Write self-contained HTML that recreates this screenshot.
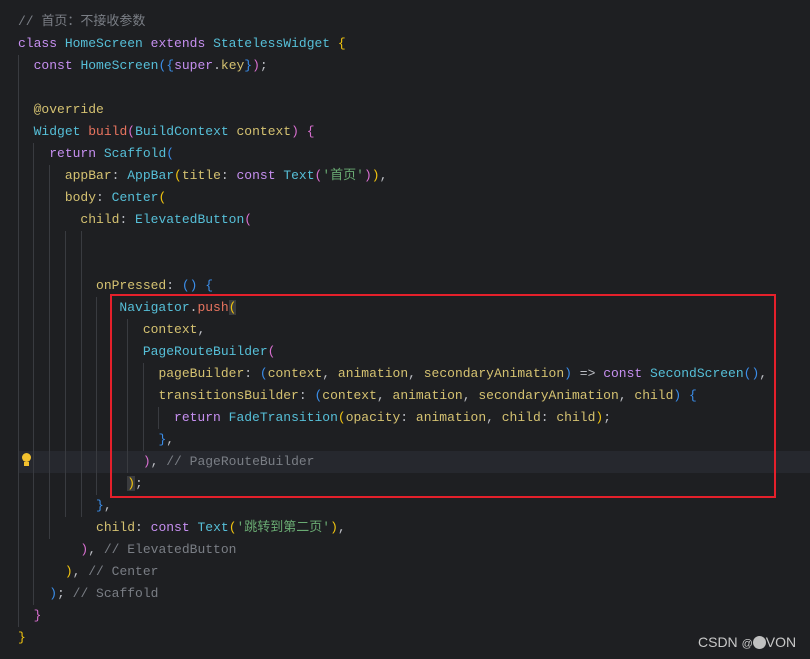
<!DOCTYPE html>
<html><head><meta charset="utf-8"><style>
body{margin:0;width:810px;height:659px;background:#1e1f22;overflow:hidden;position:relative;font-family:"Liberation Mono","Noto Sans CJK SC",monospace;font-size:13px;color:#bcbec4}
.l{position:absolute;left:18px;height:22px;line-height:22px;white-space:pre}
.g{position:absolute;width:1px;background:#393b40}
.c{color:#7a7e85}.k{color:#c68ff0}.t{color:#56bfd8}.p{color:#d5c271}.m{color:#e8745f}.s{color:#6aab73}
.y{color:#f1c40f}.pk{color:#d86fd0}.b{color:#3b8eea}
</style></head><body>
<div style="position:absolute;left:18px;top:451px;width:792px;height:22px;background:#26282e"></div>
<div class="g" style="left:18px;top:55px;height:572px"></div>
<div class="g" style="left:33px;top:143px;height:462px"></div>
<div class="g" style="left:49px;top:165px;height:374px"></div>
<div class="g" style="left:65px;top:231px;height:286px"></div>
<div class="g" style="left:81px;top:231px;height:286px"></div>
<div class="g" style="left:96px;top:297px;height:198px"></div>
<div class="g" style="left:127px;top:319px;height:154px"></div>
<div class="g" style="left:143px;top:363px;height:88px"></div>
<div class="g" style="left:158px;top:407px;height:22px"></div>
<div class="l c" style="top:11px">// 首页：不接收参数</div>
<div class="l" style="top:33px"><span class="k">class</span> <span class="t">HomeScreen</span> <span class="k">extends</span> <span class="t">StatelessWidget</span> <span class="y">{</span></div>
<div class="l" style="top:55px">  <span class="k">const</span> <span class="t">HomeScreen</span><span class="b">({</span><span class="k">super</span>.<span class="p">key</span><span class="b">}</span><span class="pk">)</span>;</div>
<div class="l" style="top:99px">  <span class="p">@override</span></div>
<div class="l" style="top:121px">  <span class="t">Widget</span> <span class="m">build</span><span class="pk">(</span><span class="t">BuildContext</span> <span class="p">context</span><span class="pk">)</span> <span class="pk">{</span></div>
<div class="l" style="top:143px">    <span class="k">return</span> <span class="t">Scaffold</span><span class="b">(</span></div>
<div class="l" style="top:165px">      <span class="p">appBar</span>: <span class="t">AppBar</span><span class="y">(</span><span class="p">title</span>: <span class="k">const</span> <span class="t">Text</span><span class="pk">(</span><span class="s">'首页'</span><span class="pk">)</span><span class="y">)</span>,</div>
<div class="l" style="top:187px">      <span class="p">body</span>: <span class="t">Center</span><span class="y">(</span></div>
<div class="l" style="top:209px">        <span class="p">child</span>: <span class="t">ElevatedButton</span><span class="pk">(</span></div>
<div class="l" style="top:275px">          <span class="p">onPressed</span>: <span class="b">() {</span></div>
<div class="l" style="top:297px">             <span class="t">Navigator</span>.<span class="m">push</span><span class="y" style="background:#3a3b3e">(</span></div>
<div class="l" style="top:319px">                <span class="p">context</span>,</div>
<div class="l" style="top:341px">                <span class="t">PageRouteBuilder</span><span class="pk">(</span></div>
<div class="l" style="top:363px">                  <span class="p">pageBuilder</span>: <span class="b">(</span><span class="p">context</span>, <span class="p">animation</span>, <span class="p">secondaryAnimation</span><span class="b">)</span> =&gt; <span class="k">const</span> <span class="t">SecondScreen</span><span class="b">()</span>,</div>
<div class="l" style="top:385px">                  <span class="p">transitionsBuilder</span>: <span class="b">(</span><span class="p">context</span>, <span class="p">animation</span>, <span class="p">secondaryAnimation</span>, <span class="p">child</span><span class="b">)</span> <span class="b">{</span></div>
<div class="l" style="top:407px">                    <span class="k">return</span> <span class="t">FadeTransition</span><span class="y">(</span><span class="p">opacity</span>: <span class="p">animation</span>, <span class="p">child</span>: <span class="p">child</span><span class="y">)</span>;</div>
<div class="l" style="top:429px">                  <span class="b">}</span>,</div>
<div class="l" style="top:451px">                <span class="pk">)</span>, <span class="c">// PageRouteBuilder</span></div>
<div class="l" style="top:473px">              <span class="y" style="background:#3a3b3e">)</span>;</div>
<div class="l" style="top:495px">          <span class="b">}</span>,</div>
<div class="l" style="top:517px">          <span class="p">child</span>: <span class="k">const</span> <span class="t">Text</span><span class="y">(</span><span class="s">'跳转到第二页'</span><span class="y">)</span>,</div>
<div class="l" style="top:539px">        <span class="pk">)</span>, <span class="c">// ElevatedButton</span></div>
<div class="l" style="top:561px">      <span class="y">)</span>, <span class="c">// Center</span></div>
<div class="l" style="top:583px">    <span class="b">)</span>; <span class="c">// Scaffold</span></div>
<div class="l" style="top:605px">  <span class="pk">}</span></div>
<div class="l" style="top:627px"><span class="y">}</span></div>
<div style="position:absolute;left:21px;top:453px;width:11px;height:16px">
<div style="width:9px;height:9px;border-radius:50%;background:#f2c12e;margin-left:1px"></div>
<div style="width:5px;height:4px;background:#f2c12e;margin-left:3px"></div></div>
<div style="position:absolute;left:110px;top:294px;width:662px;height:200px;border:2px solid #e5202b"></div>
<div style="position:absolute;left:698px;top:633px;font-family:'Liberation Sans',sans-serif;font-size:14px;color:#c8c8c8;line-height:18px;white-space:nowrap">CSDN <span style="font-size:11px">@</span><span style="display:inline-block;width:13px;height:13px;border-radius:50%;background:#c0c0c0;vertical-align:-2px"></span>VON</div>
</body></html>
